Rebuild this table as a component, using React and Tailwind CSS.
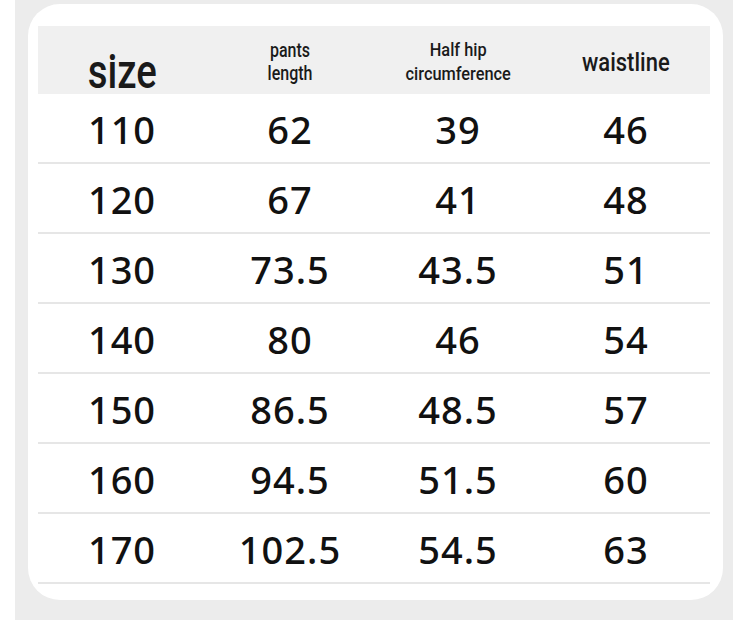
import React from 'react';

const rows = [
  ['110', '62', '39', '46'],
  ['120', '67', '41', '48'],
  ['130', '73.5', '43.5', '51'],
  ['140', '80', '46', '54'],
  ['150', '86.5', '48.5', '57'],
  ['160', '94.5', '51.5', '60'],
  ['170', '102.5', '54.5', '63'],
];

const roboto = { fontFamily: 'Roboto, "Noto Sans", sans-serif' };

const App = () => {
  return (
    <div className="w-[750px] h-[620px] bg-white pl-[15px] pr-[17px]">
      <div className="h-full bg-[#ececec] pt-[4px] pl-[13px] pr-[10px]">
        <div className="h-[596px] bg-white rounded-[32px] pt-[22px] pl-[10px] pr-[13px]">
          {/* header */}
          <div className="grid grid-cols-4 h-[68px] bg-[#f0f0f0] text-[#1a1a1a]" style={roboto}>
            <div className="flex items-start justify-center pt-[22px]">
              <span className="inline-block scale-x-[0.8] text-[48px] leading-[48px] font-medium">size</span>
            </div>
            <div className="flex items-center justify-center pt-[2px]">
              <span className="inline-block scale-x-[0.8] text-center text-[20px] leading-[23px] font-medium">
                pants<br />length
              </span>
            </div>
            <div className="flex items-center justify-center pt-[2px]">
              <span className="inline-block scale-x-[0.86] text-center text-[19px] leading-[24px] font-medium">
                Half hip<br />circumference
              </span>
            </div>
            <div className="flex items-center justify-center pt-[4px]">
              <span className="inline-block scale-x-[0.88] text-[25px] font-medium">waistline</span>
            </div>
          </div>

          {/* rows */}
          {rows.map((r) => (
            <div
              key={r[0]}
              className="grid grid-cols-4 h-[70px] border-b-2 border-[#e6e6e6] text-[#111]"
              style={{ fontFamily: '"Noto Sans", "Open Sans", sans-serif' }}
            >
              {r.map((v, i) => (
                <div key={i} className="flex items-center justify-center text-[38px] font-medium tracking-[1px] pt-[2px]">
                  {v}
                </div>
              ))}
            </div>
          ))}
        </div>
      </div>
    </div>
  );
};

export default App;
